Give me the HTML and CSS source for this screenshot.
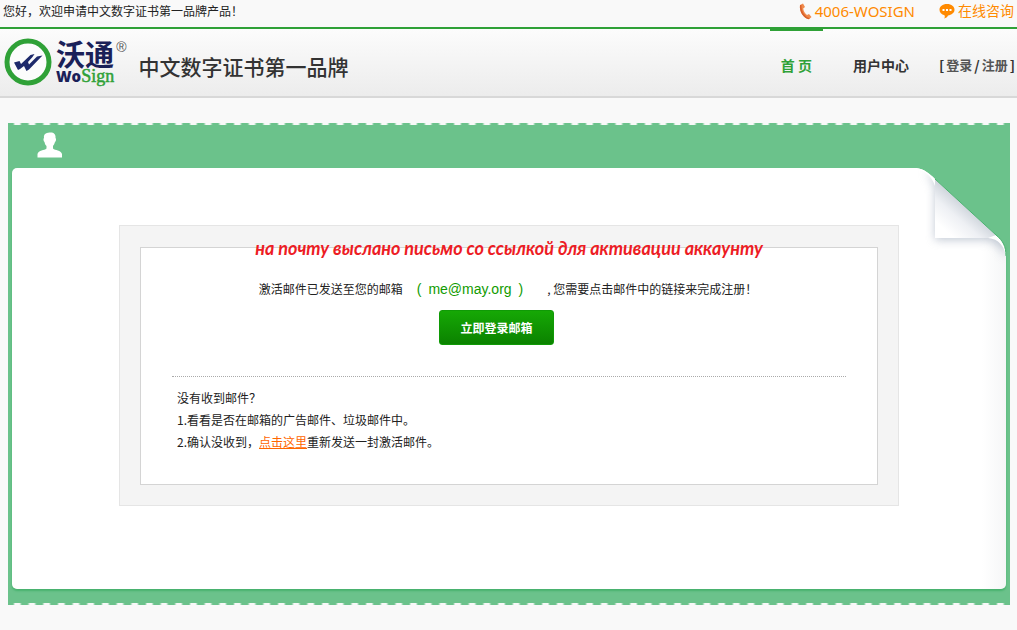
FILE: index.html
```html
<!DOCTYPE html>
<html lang="zh-CN">
<head>
    <meta charset="UTF-8">
    <meta name="viewport" content="width=device-width, initial-scale=1.0">
    <title>沃通 WoSign</title>
    <link rel="stylesheet" href="styles.css">
</head>
<body>
    <div class="topbar">
        <p>您好，欢迎申请中文数字证书第一品牌产品！</p>
        <div class="contact">
            <a href="#" class="contact-link">
                <svg width="13" height="17" viewBox="0 0 13 17">
                    <path d="M1 2 L4 0.500 L6 4 L4.200 5.500 C4.500 8.500 6 10.500 8 12 L10 11 L12.500 14 L10 16.200 C5 15.500 0 9 1 2Z" fill="#f08a4b"/>
                    <path d="M1 2 C0 9 5 15.500 10 16.200 L10.500 15 C6 14 2 8 2.500 2Z" fill="#d9622b"/>
                </svg>
                <span>4006-WOSIGN</span>
            </a>
            <a href="#" class="contact-link chat">
                <svg width="16" height="16" viewBox="0 0 16 16">
                    <path d="M8 1 C12.500 1 15.500 3.500 15.500 6.800 C15.500 10 12.500 12 9 12.500 C8.500 14 7 15 5 15.500 C6 14.500 6 13.500 5.500 12.200 C2.500 11.500 0.500 9.500 0.500 6.800 C0.500 3.500 3.500 1 8 1Z" fill="#ff8a00"/>
                    <path d="M3.500 6h2v2h-2z M7 6h2v2h-2z M10.500 6h2v2h-2z" fill="#fff"/>
                </svg>
                <span>在线咨询</span>
            </a>
        </div>
    </div>

    <header class="header">
        <a href="#" class="logo">
            <svg class="logo-mark" width="48" height="48" viewBox="0 0 48 48">
                <circle cx="24" cy="24" r="21" fill="#fcfcfc" stroke="#2fa137" stroke-width="5"/>
                <path d="M10 24.500 L15.500 23 L17 26 L26.500 17 L30.500 16 L28.500 19 L24 24 L25 26.500 L33 18.500 L38.500 17.500 L25 31.500 L22.500 33 L20 28 L16 31 L14 32Z" fill="#1e2a6b"/>
            </svg>
            <span class="logo-text">
                <span class="logo-cn">沃通</span>
                <span class="logo-en"><b>Wo</b><i>Sign</i></span>
            </span>
            <span class="logo-reg">®</span>
        </a>
        <p class="slogan">中文数字证书第一品牌</p>
        <nav class="nav">
            <a href="#" class="nav-item active">首 页</a>
            <a href="#" class="nav-item">用户中心</a>
            <span class="account"><span>[</span><a href="#">登录</a><span>/</span><a href="#">注册</a><span>]</span></span>
        </nav>
    </header>

    <main class="ticket">
        <svg class="user-icon" width="26" height="26" viewBox="0 0 26 26">
            <path d="M12.500 0.500 C16.500 0 19 2 18.500 6 C19.500 6.500 19 9.500 18 10 C17.500 12 16.500 13 16 14 V16.500 C18 18.500 24 18 25 22 V25.500 H0.500 V22 C1.500 18 7.500 18.500 9.500 16.500 V14 C8.500 13 7.800 12 7.500 10 C6.500 9.500 6 6.500 7 6 C6.500 2.500 8.500 0.800 12.500 0.500Z" fill="#fff"/>
        </svg>
        <div class="paper">
            <svg class="fold" width="130" height="130" viewBox="0 0 130 130">
                <defs>
                    <linearGradient id="flap" gradientUnits="userSpaceOnUse" x1="90" y1="38" x2="69" y2="62">
                        <stop offset="0" stop-color="#cfd5dc"/>
                        <stop offset="0.450" stop-color="#eef0f4"/>
                        <stop offset="1" stop-color="#fff"/>
                    </linearGradient>
                    <filter id="soft" x="-50%" y="-50%" width="200%" height="200%">
                        <feGaussianBlur stdDeviation="5"/>
                    </filter>
                    <clipPath id="sheet">
                        <path d="M0 0 H40 C48 1 53 5 59 11 L120 67 C127 73 130 78 130 88 V130 H0Z"/>
                    </clipPath>
                </defs>
                <path d="M40 0 C48 1 53 5 59 11 L120 67 C127 73 130 78 130 88 V0Z" fill="#6bc28b"/>
                <g clip-path="url(#sheet)">
                    <path d="M48 4 C54 8 58 14 59 22 V72 H112 C120 74 126 80 129 90 L132 70 L60 8Z" fill="#9aa6b8" opacity="0.600" filter="url(#soft)"/>
                </g>
                <path d="M59 11 V70 H114 L120 67Z" fill="url(#flap)"/>
                <path d="M40 0 C48 1 53 5 59 11 V18 C56 8 49 3 40 1Z M112 70 C123 71 128 78 130 88 C129 77 126 72 120 67Z" fill="#fff"/>
                <path d="M59 11 L120 67 C127 73 130 78 130 88" fill="none" stroke="#48b26e" stroke-width="1"/>
            </svg>
            <div class="notice">
                <div class="notice-inner">
                    <p class="translation" lang="ru">на почту выслано письмо со ссылкой для активации аккаунту</p>
                    <p class="sent">
                        <span>激活邮件已发送至您的邮箱</span>
                        <span class="email"><span>(</span><span>me@may.org</span><span>)</span></span>
                        <span>, 您需要点击邮件中的链接来完成注册！</span>
                    </p>
                    <button type="button" class="button">立即登录邮箱</button>
                    <div class="help">
                        <p>没有收到邮件？</p>
                        <p>1.看看是否在邮箱的广告邮件、垃圾邮件中。</p>
                        <p>2.确认没收到，<a href="#">点击这里</a>重新发送一封激活邮件。</p>
                    </div>
                </div>
            </div>
        </div>
    </main>
</body>
</html>
```

FILE: styles.css
```css
:root {
    --green: #2fa137;
    --ticket: #6bc28b;
    --ticket-dark: #48b26e;
    --orange: #ff8a00;
    --navy: #1a2058;
}

* {
    margin: 0;
    padding: 0;
    box-sizing: border-box;
}

body {
    font-family: "Noto Sans CJK SC", sans-serif;
    font-size: 12px;
    line-height: 22px;
    color: #222;
    background-color: #f9f9f9;
}

a {
    color: inherit;
    text-decoration: none;
}

svg {
    display: block;
    flex: none;
}

.topbar {
    display: flex;
    justify-content: space-between;
    height: 27px;
    padding: 0 3px;
}

.contact {
    display: flex;
    gap: 24px;
}

.contact-link {
    display: flex;
    align-items: center;
    gap: 3px;
    height: 22px;
    font-family: "Noto Sans", "Noto Sans CJK SC", sans-serif;
    font-size: 15px;
    color: var(--orange);
}

.contact-link.chat {
    font-size: 14px;
}

.header {
    display: flex;
    height: 71px;
    padding-left: 4px;
    border-top: 2px solid var(--green);
    border-bottom: 2px solid #d8d8d8;
    background: linear-gradient(#fcfcfc, #ececec);
}

.logo {
    display: flex;
    align-items: flex-start;
    padding-top: 9px;
}

.logo-text {
    display: flex;
    flex-direction: column;
    margin-left: 4px;
    color: var(--navy);
}

.logo-cn {
    font-size: 29px;
    font-weight: 700;
    line-height: 30px;
}

.logo-en {
    display: flex;
    align-items: baseline;
    line-height: 16px;
}

.logo-en b {
    font-family: "Open Sans", sans-serif;
    font-size: 15px;
    font-weight: 800;
}

.logo-en i {
    font-family: "Liberation Serif", serif;
    font-size: 18px;
    font-style: normal;
    color: var(--green);
    -webkit-text-stroke: 0.500px var(--green);
}

.logo-reg {
    margin-left: 2px;
    font-family: "Liberation Sans", sans-serif;
    font-size: 14px;
    line-height: 18px;
    color: #555;
}

.slogan {
    margin-left: 12px;
    font-size: 21px;
    font-weight: 500;
    line-height: 74px;
    color: #333;
    white-space: nowrap;
}

.nav {
    display: flex;
    align-items: flex-start;
    gap: 19px;
    margin-left: auto;
    font-size: 14px;
    font-weight: 700;
    line-height: 72px;
    color: #333;
    white-space: nowrap;
}

.nav-item {
    padding: 0 11px;
}

.nav-item.active {
    color: var(--green);
    box-shadow: inset 0 2px var(--green);
}

.account {
    display: flex;
    gap: 2px;
    padding-right: 2px;
}

.account a {
    font-size: 13px;
    color: #555;
}

.ticket {
    position: relative;
    margin: 25px 7px 24px 8px;
    padding: 45px 4px 16px;
    background: linear-gradient(var(--ticket), var(--ticket)) center / 100% calc(100% - 4px) no-repeat;
}

/* perforated edges */
.ticket::before,
.ticket::after {
    content: "";
    position: absolute;
    left: 0;
    right: 0;
    height: 2px;
    padding: 0 2px;
    background-image: linear-gradient(to right, var(--ticket) 3px, transparent 5px calc(100% - 5px), var(--ticket) calc(100% - 3px));
    background-origin: content-box;
    background-size: calc(100% / 68) 100%;
}

.ticket::before {
    top: 0;
}

.ticket::after {
    bottom: 0;
}

.user-icon {
    position: absolute;
    top: 9px;
    left: 29px;
}

.paper {
    position: relative;
    padding: 57px 20px 83px;
    border-radius: 5px;
    border-top-right-radius: 90px 88px;
    background: linear-gradient(to left, #f5f6f7, #fff 24px);
    box-shadow: 0 2px 2px var(--ticket-dark);
}

.fold {
    position: absolute;
    top: 0;
    right: 0;
}

.notice {
    position: relative;
    max-width: 780px;
    margin: 0 auto;
    padding: 21px 20px 20px;
    border: 1px solid #e5e5e5;
    background-color: #f4f4f4;
}

.notice-inner {
    position: relative;
    padding: 30px 31px;
    border: 1px solid #d4d4d4;
    background-color: #fff;
}

.translation {
    position: absolute;
    top: -11px;
    left: 0;
    right: 0;
    font-family: Lato, "Noto Sans", sans-serif;
    font-size: 18px;
    font-style: italic;
    font-weight: 700;
    text-align: center;
    color: #ed1c24;
    white-space: nowrap;
}

.sent {
    display: flex;
    justify-content: center;
    padding-right: 2px;
    white-space: nowrap;
}

.email {
    display: flex;
    gap: 7px;
    margin: 0 24px 0 14px;
    font-family: "Liberation Sans", sans-serif;
    font-size: 14px;
    color: #119b00;
}

.button {
    display: block;
    width: 115px;
    height: 35px;
    margin: 10px auto 31px 267px;
    border: 1px solid #109a06;
    border-radius: 3px;
    background: linear-gradient(#16a805, #0b8200);
    font-family: inherit;
    font-size: 12px;
    font-weight: 700;
    color: #fff;
    cursor: pointer;
}

.help {
    padding: 10px 5px 1px;
    border-top: 1px dotted #aaa;
}

.help a {
    color: #ff6600;
    text-decoration: underline;
}
```
